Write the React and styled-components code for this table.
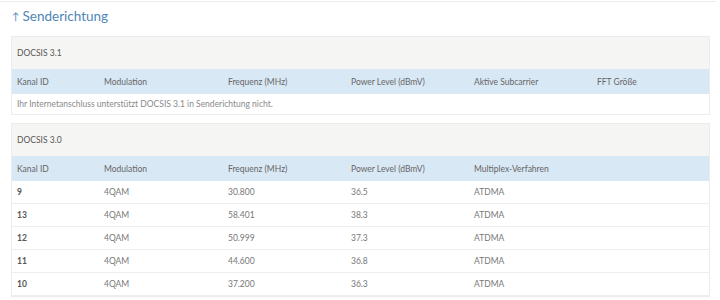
import React from 'react'
import styled, { createGlobalStyle } from 'styled-components'

const GlobalStyle = createGlobalStyle`
  html, body {
    margin: 0;
    padding: 0;
    background: #ffffff;
    font-family: Lato, "Open Sans", "Liberation Sans", sans-serif;
  }
`

const docsis30 = [
    { id: 9, mod: '4QAM', freq: '30.800', power: '36.5', mux: 'ATDMA' },
    { id: 13, mod: '4QAM', freq: '58.401', power: '38.3', mux: 'ATDMA' },
    { id: 12, mod: '4QAM', freq: '50.999', power: '37.3', mux: 'ATDMA' },
    { id: 11, mod: '4QAM', freq: '44.600', power: '36.8', mux: 'ATDMA' },
    { id: 10, mod: '4QAM', freq: '37.200', power: '36.3', mux: 'ATDMA' },
]

export default function App() {
    return (
        <>
            <GlobalStyle />
            <Page>
                <Title>
                    <Arrow>↑</Arrow>Senderichtung
                </Title>

                <Card>
                    <CardHead>DOCSIS 3.1</CardHead>
                    <Grid cols={6}>
                        <HeadCell>Kanal ID</HeadCell>
                        <HeadCell>Modulation</HeadCell>
                        <HeadCell>Frequenz (MHz)</HeadCell>
                        <HeadCell>Power Level (dBmV)</HeadCell>
                        <HeadCell>Aktive Subcarrier</HeadCell>
                        <HeadCell>FFT Größe</HeadCell>
                    </Grid>
                    <Message>Ihr Internetanschluss unterstützt DOCSIS 3.1 in Senderichtung nicht.</Message>
                </Card>

                <Card>
                    <CardHead>DOCSIS 3.0</CardHead>
                    <Grid cols={5}>
                        <HeadCell>Kanal ID</HeadCell>
                        <HeadCell>Modulation</HeadCell>
                        <HeadCell>Frequenz (MHz)</HeadCell>
                        <HeadCell>Power Level (dBmV)</HeadCell>
                        <HeadCell>Multiplex-Verfahren</HeadCell>
                        {docsis30.map(row => (
                            <React.Fragment key={row.id}>
                                <Cell strong>{row.id}</Cell>
                                <Cell>{row.mod}</Cell>
                                <Cell>{row.freq}</Cell>
                                <Cell>{row.power}</Cell>
                                <Cell>{row.mux}</Cell>
                            </React.Fragment>
                        ))}
                    </Grid>
                </Card>
            </Page>
        </>
    )
}

const Page = styled.div`
    width: 716px;
    height: 299px;
    box-sizing: border-box;
    border-top: 1px solid #ececec;
    margin-top: 1px;
    padding: 0 6px 0 11px;
    overflow: hidden;
`

const Title = styled.h2`
    margin: 0;
    height: 34px;
    padding-bottom: 6px;
    box-sizing: border-box;
    display: flex;
    align-items: center;
    font-size: 13.5px;
    font-weight: 400;
    color: #4f86b6;
`

const Arrow = styled.span`
    font-size: 10px;
    margin-right: 3px;
    padding-left: 1px;
`

const Card = styled.div`
    border: 1px solid #ececec;
    margin-bottom: 8px;
    background: #fff;
`

const CardHead = styled.div`
    height: 32px;
    display: flex;
    align-items: center;
    padding-left: 5px;
    background: #f5f5f3;
    font-size: 8.5px;
    color: #555;
`

const Grid = styled.div`
    display: grid;
    grid-template-columns: ${p => p.cols === 6 ? '87px 124px 123px 123px 123px 1fr' : '87px 124px 123px 123px 1fr'};
`

const HeadCell = styled.div`
    height: 25px;
    display: flex;
    align-items: center;
    padding-left: 5px;
    background: #d9e8f5;
    font-size: 8.5px;
    color: #666;
`

const Cell = styled.div`
    height: 22px;
    display: flex;
    align-items: center;
    padding-left: 5px;
    border-bottom: 1px solid #eeeeee;
    font-size: 8.5px;
    color: ${p => p.strong ? '#555' : '#777'};
    font-weight: ${p => p.strong ? 700 : 400};
`

const Message = styled.div`
    height: 20px;
    display: flex;
    align-items: center;
    padding-left: 5px;
    font-size: 8.5px;
    color: #8a8a8a;
`
